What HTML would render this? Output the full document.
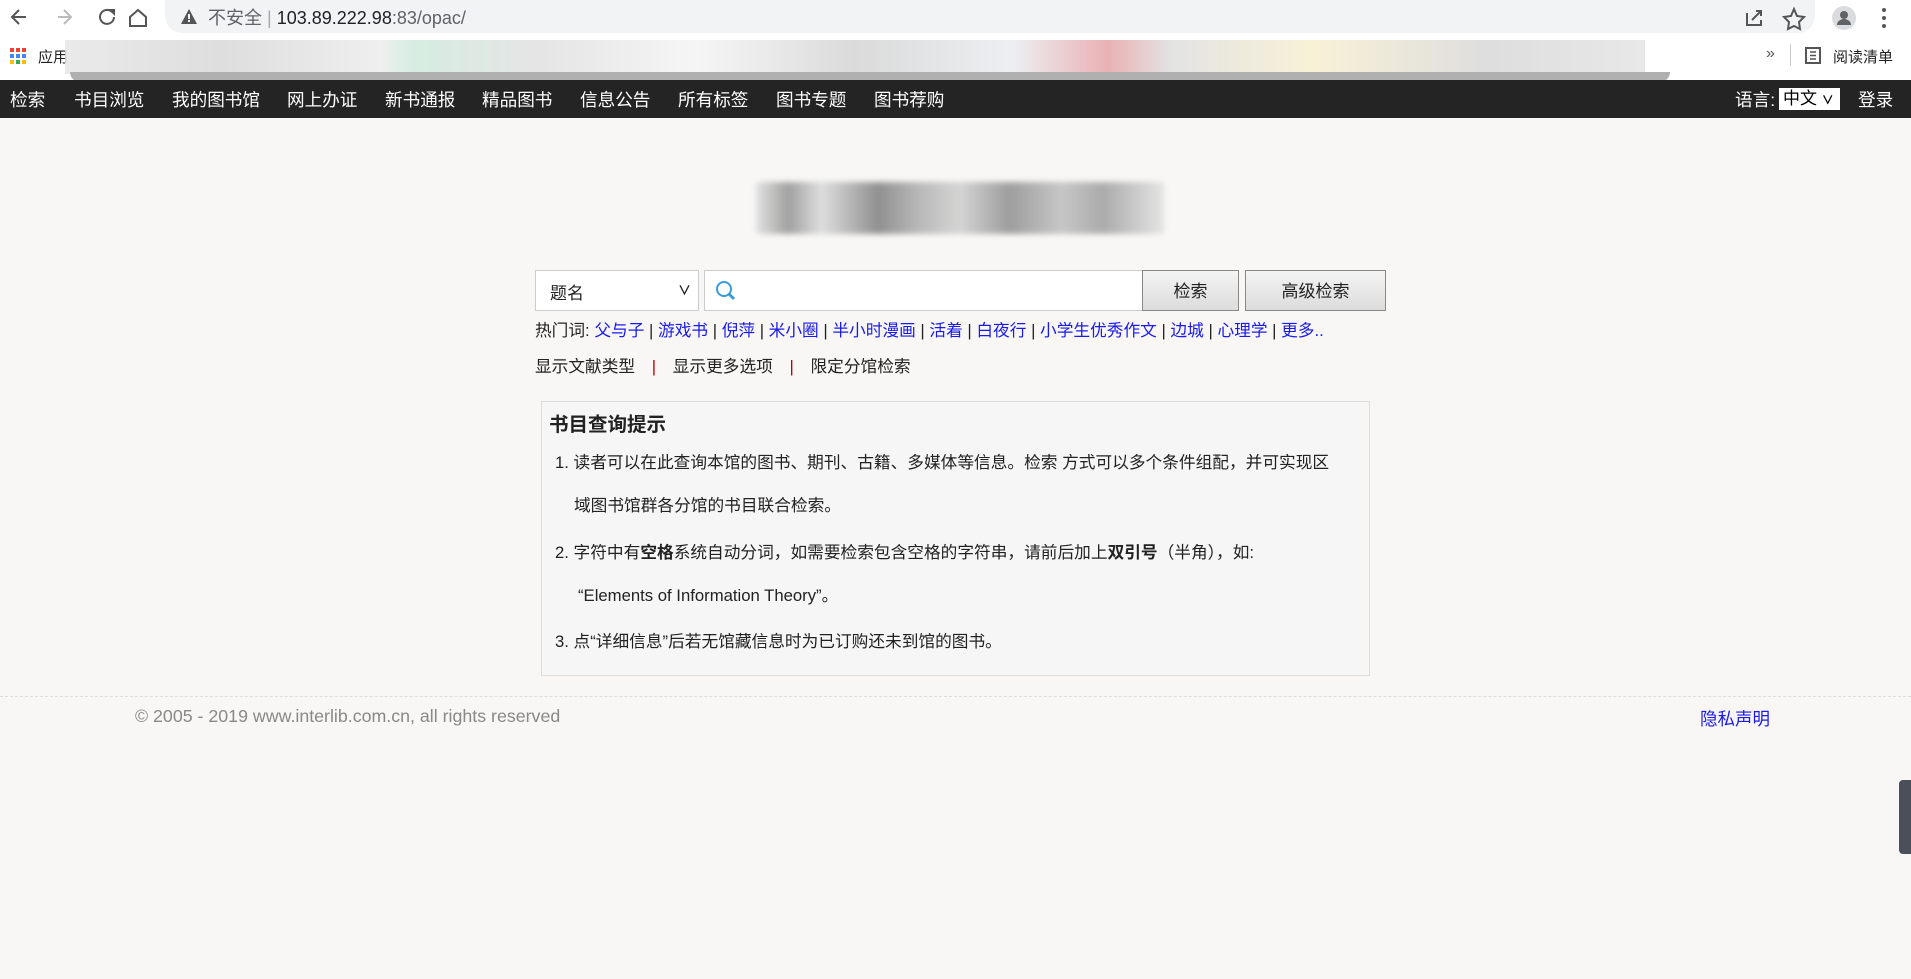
<!DOCTYPE html>
<html><head><meta charset="utf-8"><style>
*{margin:0;padding:0;box-sizing:border-box}
body{width:1911px;height:979px;background:#f8f7f6;font-family:"Liberation Sans","Noto Sans CJK SC",sans-serif;position:relative;overflow:hidden;color:#222}
.a{position:absolute;white-space:nowrap}
#tb{left:0;top:0;width:1911px;height:37px;background:#fff}
#url{left:165px;top:0;width:1650px;height:33px;background:#f1f3f4;border-radius:0 0 17px 17px}
#bm{left:0;top:37px;width:1911px;height:43px;background:#fff}
#nav{left:0;top:80px;width:1911px;height:38px;background:#242424;color:#fff;font-size:17.6px}
#nav span{position:absolute;top:7px}
.blue{color:#1a1aee}
.box{left:541px;top:401px;width:829px;height:275px;border:1px solid #dcdcdc;background:#f6f6f6}
.t{font-size:16.7px;color:#222}
</style></head><body>
<div class="a" id="tb"></div>
<div class="a" id="url"></div>
<svg class="a" style="left:8px;top:6px" width="140" height="24" viewBox="0 0 140 24">
<path d="M18 11H5M11 4l-7 7 7 7" fill="none" stroke="#555" stroke-width="2"/>
<path d="M50 11h13M56 4l7 7-7 7" fill="none" stroke="#bbb" stroke-width="2"/>
<path d="M104 6a7 7 0 1 0 2 5" fill="none" stroke="#555" stroke-width="2"/><path d="M100 3h7v7z" fill="#555"/>
<path d="M130 4l-8 7v9h16v-9z" fill="none" stroke="#555" stroke-width="2"/>
</svg>
<svg class="a" style="left:180px;top:8px" width="18" height="18"><path d="M9 1L17 16H1z" fill="#555"/><rect x="8" y="6" width="2" height="5" fill="#f1f3f4"/><rect x="8" y="12" width="2" height="2" fill="#f1f3f4"/></svg>
<div class="a" style="left:208px;top:4px;font-size:18px;color:#5f6368">不安全 <span style="color:#aaa">|</span> <span style="color:#202124">103.89.222.98</span>:83/opac/</div>
<svg class="a" style="left:1742px;top:5px" width="160" height="26"><path d="M5 8v12h14v-5M10 15l9-9M14 6h5v5" fill="none" stroke="#555" stroke-width="2"/><path d="M52 4l3 7 7 1-5 5 1 7-6-3-6 3 1-7-5-5 7-1z" fill="none" stroke="#555" stroke-width="2"/><circle cx="102" cy="13" r="12" fill="#dadce0"/><circle cx="102" cy="10" r="4" fill="#5f6368"/><path d="M95 20a7 6 0 0 1 14 0z" fill="#5f6368"/><circle cx="142" cy="5" r="2" fill="#555"/><circle cx="142" cy="13" r="2" fill="#555"/><circle cx="142" cy="21" r="2" fill="#555"/></svg>
<div class="a" id="bm"></div>
<svg class="a" style="left:10px;top:48px" width="16" height="16"><g fill="#e94235"><rect x="0" y="0" width="4" height="4"/><rect x="6" y="0" width="4" height="4"/><rect x="12" y="0" width="4" height="4"/></g><g fill="#4285f4"><rect x="0" y="6" width="4" height="4"/><rect x="6" y="6" width="4" height="4"/><rect x="12" y="6" width="4" height="4"/></g><g fill="#fbbc04"><rect x="0" y="12" width="4" height="4"/><rect x="12" y="12" width="4" height="4"/></g><rect x="6" y="12" width="4" height="4" fill="#34a853"/></svg>
<div class="a" style="left:38px;top:46px;font-size:15px">应用</div>
<div class="a" style="left:65px;top:40px;width:1580px;height:34px;background:linear-gradient(90deg,#e6e6e6,#d8d8d8 10%,#ececec 20%,#cfe9db 22%,#e0e0e0 30%,#f4f4f4 40%,#d4d4d4 50%,#e9ecef 60%,#e5a3a6 66%,#dedede 70%,#f7efcf 79%,#d8d8d8 90%,#e4e4e4);opacity:.85"></div>
<div class="a" style="left:70px;top:72px;width:1600px;height:10px;background:#b0b0b0;border-radius:0 0 40px 40px"></div>
<div class="a" style="left:1766px;top:45px;font-size:16px;color:#555">»</div>
<div class="a" style="left:1790px;top:44px;width:1px;height:22px;background:#ccc"></div>
<svg class="a" style="left:1805px;top:47px" width="16" height="17"><rect x="1" y="1" width="14" height="15" fill="none" stroke="#555" stroke-width="2"/><path d="M5 5h6M5 8.5h6M5 12h6" stroke="#555" stroke-width="1.5"/></svg>
<div class="a" style="left:1833px;top:46px;font-size:15px">阅读清单</div>
<div class="a" id="nav">
<span style="left:10px">检索</span><span style="left:74px">书目浏览</span><span style="left:172px">我的图书馆</span><span style="left:287px">网上办证</span><span style="left:385px">新书通报</span><span style="left:482px">精品图书</span><span style="left:580px">信息公告</span><span style="left:678px">所有标签</span><span style="left:776px">图书专题</span><span style="left:874px">图书荐购</span>
<span style="left:1735px">语言:</span>
<span style="left:1779px;top:8px;width:61px;height:22px;background:#fff;color:#000;font-size:17px;padding-left:4px;line-height:22px">中文 <small style="font-size:12px;font-weight:bold">∨</small></span>
<span style="left:1858px">登录</span>
</div>
<div class="a" style="left:756px;top:182px;width:408px;height:52px;background:linear-gradient(90deg,#ddd,#8c8c8c 8%,#d8d8d8 16%,#777 30%,#aaa 40%,#ccc 50%,#888 62%,#bbb 75%,#999 85%,#e0e0e0);filter:blur(3px);opacity:.8"></div>
<div class="a" style="left:535px;top:270px;width:164px;height:41px;background:#fff;border:1px solid #ccc;font-size:17px;padding:8px 0 0 14px">题名<span style="position:absolute;right:7px;top:9px;font-size:13px;font-weight:bold">∨</span></div>
<div class="a" style="left:704px;top:270px;width:439px;height:41px;background:#fff;border:1px solid #ccc"></div>
<svg class="a" style="left:714px;top:279px" width="22" height="24"><circle cx="10" cy="10" r="7" fill="none" stroke="#3a9bd8" stroke-width="2"/><path d="M15 15l5 5" stroke="#3a9bd8" stroke-width="3"/></svg>
<div class="a" style="left:1142px;top:270px;width:97px;height:41px;background:linear-gradient(#f4f4f4,#dcdcdc);border:1px solid #888;font-size:17px;text-align:center;line-height:41px">检索</div>
<div class="a" style="left:1245px;top:270px;width:141px;height:41px;background:linear-gradient(#f4f4f4,#dcdcdc);border:1px solid #888;font-size:17px;text-align:center;line-height:41px">高级检索</div>
<div class="a t" style="left:535px;top:317px">热门词: <span class="blue">父与子</span> | <span class="blue">游戏书</span> | <span class="blue">倪萍</span> | <span class="blue">米小圈</span> | <span class="blue">半小时漫画</span> | <span class="blue">活着</span> | <span class="blue">白夜行</span> | <span class="blue">小学生优秀作文</span> | <span class="blue">边城</span> | <span class="blue">心理学</span> | <span class="blue">更多..</span></div>
<div class="a t" style="left:535px;top:353px">显示文献类型 <span style="color:#b00;margin:0 12px">|</span> 显示更多选项 <span style="color:#b00;margin:0 12px">|</span> 限定分馆检索</div>
<div class="a box"></div>
<div class="a" style="left:549px;top:408px;font-size:19.5px;font-weight:bold">书目查询提示</div>
<div class="a t" style="left:555px;top:449px">1. 读者可以在此查询本馆的图书、期刊、古籍、多媒体等信息。检索 方式可以多个条件组配，并可实现区</div>
<div class="a t" style="left:574px;top:492px">域图书馆群各分馆的书目联合检索。</div>
<div class="a t" style="left:555px;top:539px">2. 字符中有<b>空格</b>系统自动分词，如需要检索包含空格的字符串，请前后加上<b>双引号</b>（半角），如:</div>
<div class="a t" style="left:578px;top:582px">“Elements of Information Theory”。</div>
<div class="a t" style="left:555px;top:628px">3. 点“详细信息”后若无馆藏信息时为已订购还未到馆的图书。</div>
<div class="a" style="left:0;top:696px;width:1911px;border-top:1px dashed #ddd"></div>
<div class="a" style="left:135px;top:706px;font-size:17.8px;color:#888">© 2005 - 2019 www.interlib.com.cn, all rights reserved</div>
<div class="a" style="left:1700px;top:706px;font-size:17.5px;color:#1a1aee">隐私声明</div>
<div class="a" style="left:1899px;top:780px;width:12px;height:74px;background:#4a4f5a;border-radius:4px 0 0 4px"></div>
</body></html>
